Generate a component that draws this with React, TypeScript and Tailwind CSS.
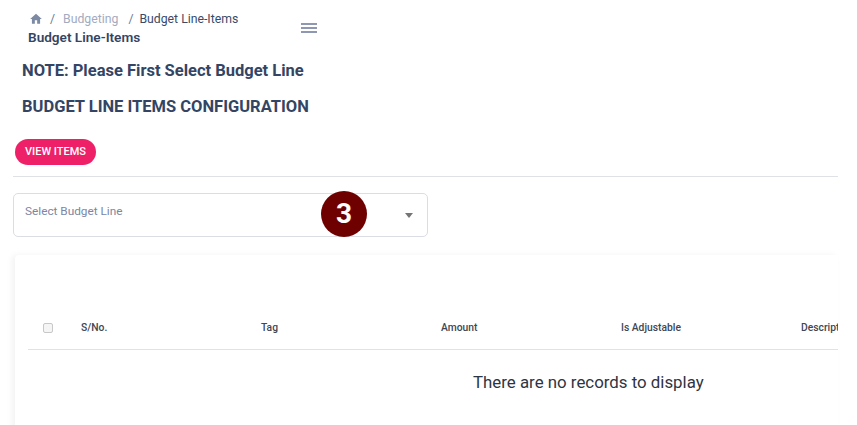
const columns = ["Tag", "Amount", "Is Adjustable", "Description"]

function Breadcrumb() {
  return (
    <div className="flex items-start pl-[28px]">
      <div className="w-[269px]">
        <div className="flex h-[24px] items-center text-[12.25px] text-[#3a4a68]">
          <svg viewBox="0 0 24 24" className="ml-px h-[14px] w-[14px] fill-[#7d8aa3]">
            <path d="M10 20v-6h4v6h5v-8h3L12 3 2 12h3v8z" />
          </svg>
          <span className="ml-[7px] text-[#6b7a99]">/</span>
          <span className="ml-[8px] text-[#a3abc0]">Budgeting</span>
          <span className="ml-[10px] text-[#6b7a99]">/</span>
          <span className="ml-[6px]">Budget Line-Items</span>
        </div>
        <div className="-mt-[3px] text-[13.6px] leading-[18px] font-semibold text-[#344563]">Budget Line-Items</div>
      </div>
      <button className="mt-[9px] flex h-[24px] w-[24px] items-center justify-center">
        <svg viewBox="0 0 16 12" className="h-[12px] w-[16px] stroke-[#69779a]" strokeWidth="1.4">
          <path d="M0 2h16M0 6h16M0 10h16" />
        </svg>
      </button>
    </div>
  )
}

function RecordsTable() {
  return (
    <div className="mt-[18px] ml-[2px] h-[176px] overflow-hidden rounded-tl-[4px] bg-white pl-[13px] shadow-[-3px_0_6px_rgba(0,0,0,0.05)]">
      <div className="flex h-[95px] items-end border-b border-[#e2e2e2]">
        <div className="flex h-[42px] w-full items-center pl-[15px] text-[10.3px] font-medium text-[#3f4654]">
          <div className="h-[10px] w-[10px] shrink-0 rounded-[2px] border border-[#c8c8c8] bg-[#f5f5f5]" />
          <div className="ml-[28px] w-[180px] shrink-0">S/No.</div>
          {columns.map((col) => (
            <div key={col} className="w-[180px] shrink-0 whitespace-nowrap">{col}</div>
          ))}
        </div>
      </div>
      <div className="pt-[20px] pl-[445px] text-[16.85px] leading-[24px] text-[#2f3442]">There are no records to display</div>
    </div>
  )
}

export default function App() {
  return (
    <div className="relative h-[425px] w-[857px] overflow-hidden bg-white font-['Roboto',sans-serif]">
      <div className="pt-[7px]">
        <Breadcrumb />
        <div className="pl-[22px]">
          <h2 className="mt-[13px] text-[16.5px] leading-[24px] font-bold text-[#344563]">NOTE: Please First Select Budget Line</h2>
          <h2 className="mt-[12px] text-[16.5px] leading-[24px] font-bold text-[#344563]">BUDGET LINE ITEMS CONFIGURATION</h2>
        </div>
        <div className="mr-[19px] ml-[13px]">
          <div className="mt-[20px] border-b border-[#dee2e6] pb-[11px]">
            <button className="ml-[2px] block h-[26px] rounded-full bg-[#ee2168] px-[10px] text-[11px] font-medium text-white">VIEW ITEMS</button>
          </div>
          <div className="mt-[16px] flex h-[44px] w-[415px] items-start justify-between rounded-[5px] border border-[#dadde3] bg-white pl-[11px]">
            <span className="mt-[9px] text-[11.8px] leading-[16px] text-[#7b86a5]">Select Budget Line</span>
            <span className="mt-[19px] mr-[14px] h-0 w-0 border-x-[4px] border-t-[5px] border-x-transparent border-t-[#757575]" />
          </div>
          <RecordsTable />
        </div>
      </div>
      <div className="absolute top-[191px] left-[321px] flex h-[46px] w-[46px] items-center justify-center rounded-full bg-[#6e0000] text-[28px] font-bold text-white">3</div>
    </div>
  )
}
